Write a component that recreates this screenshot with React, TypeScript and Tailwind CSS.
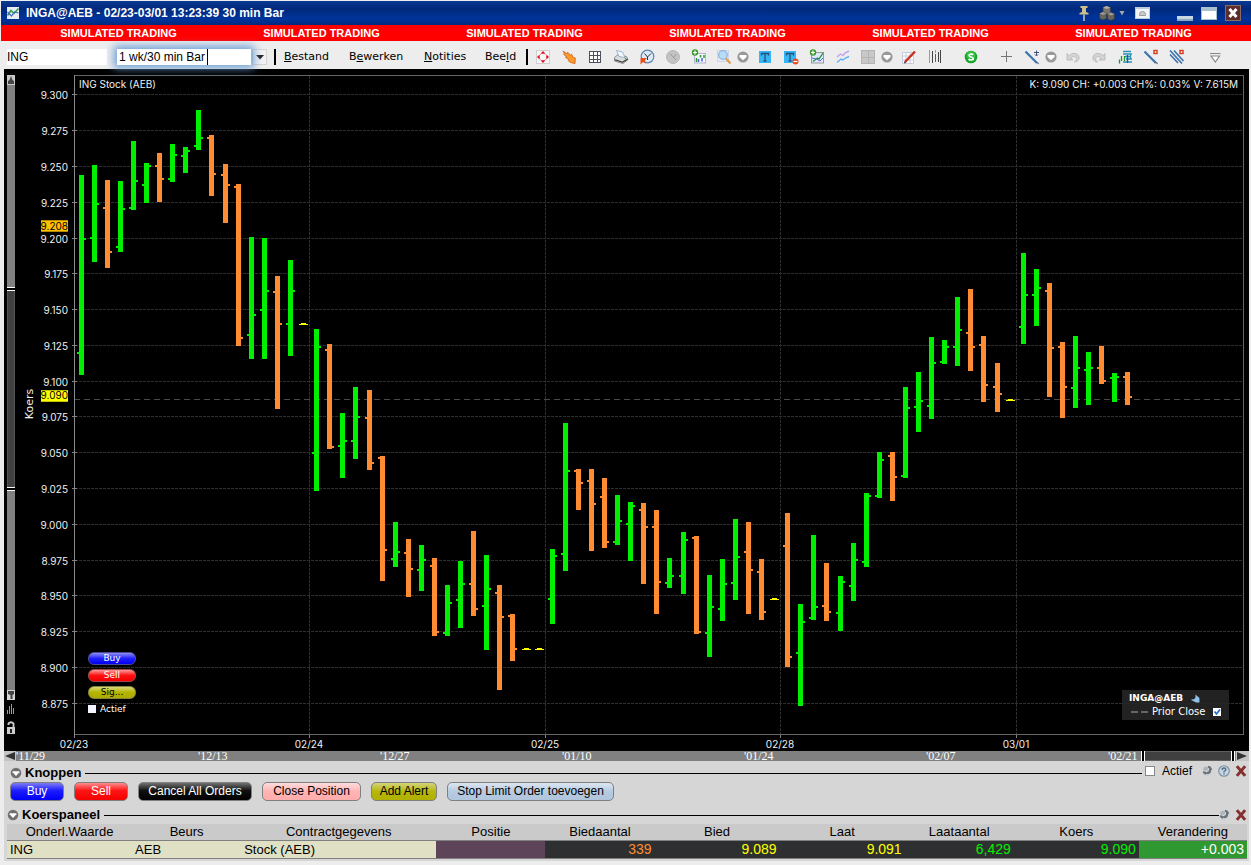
import React from 'react';

type Tone = 'up' | 'down';
type Bar = [x: number, high: number, low: number, open: number, close: number, tone: Tone];

const BARS: Bar[] = [
  [79, 175, 375, 353, 239, 'up'], [92, 165, 262, 238, 204, 'up'], [105, 180, 268, 208, 252, 'down'],
  [118, 181, 252, 247, 209, 'up'], [131, 141, 210, 208, 181, 'up'], [144, 163, 203, 185, 166, 'up'],
  [157, 153, 202, 166, 179, 'down'], [170, 144, 182, 179, 155, 'up'], [183, 147, 173, 156, 151, 'up'],
  [196, 110, 150, 146, 138, 'up'], [209, 135, 196, 138, 174, 'down'], [223, 164, 223, 175, 185, 'down'],
  [236, 184, 346, 187, 338, 'down'], [249, 237, 359, 335, 315, 'up'], [262, 238, 359, 310, 291, 'up'],
  [275, 276, 409, 292, 324, 'down'], [288, 260, 356, 324, 291, 'up'], [314, 329, 491, 453, 347, 'up'],
  [327, 344, 449, 350, 447, 'down'], [340, 413, 478, 446, 441, 'up'], [353, 387, 459, 441, 417, 'up'],
  [367, 390, 470, 418, 463, 'down'], [380, 456, 581, 458, 550, 'down'], [393, 522, 567, 559, 552, 'up'],
  [406, 539, 597, 553, 569, 'down'], [419, 545, 591, 570, 560, 'up'], [432, 558, 636, 566, 632, 'down'],
  [445, 585, 636, 633, 603, 'up'], [458, 561, 628, 600, 584, 'up'], [471, 531, 616, 584, 609, 'down'],
  [484, 555, 650, 606, 589, 'up'], [497, 585, 690, 593, 617, 'down'], [510, 614, 661, 616, 649, 'down'],
  [550, 549, 624, 599, 556, 'up'], [563, 423, 571, 554, 471, 'up'], [576, 469, 510, 471, 483, 'down'],
  [589, 469, 551, 481, 504, 'down'], [602, 478, 548, 497, 542, 'down'], [615, 495, 545, 542, 521, 'up'],
  [628, 502, 561, 524, 506, 'up'], [641, 503, 584, 510, 527, 'down'], [654, 510, 614, 527, 582, 'down'],
  [667, 558, 588, 583, 576, 'up'], [681, 532, 594, 576, 540, 'up'], [694, 536, 634, 538, 632, 'down'],
  [707, 575, 657, 633, 607, 'up'], [720, 559, 621, 609, 584, 'up'], [733, 519, 600, 583, 557, 'up'],
  [746, 522, 614, 552, 570, 'down'], [759, 559, 620, 572, 612, 'down'], [785, 513, 667, 546, 657, 'down'],
  [798, 604, 706, 653, 622, 'up'], [811, 535, 620, 618, 607, 'up'], [824, 563, 621, 606, 612, 'down'],
  [838, 576, 631, 613, 582, 'up'], [851, 543, 601, 586, 560, 'up'], [864, 493, 567, 562, 496, 'up'],
  [877, 452, 498, 496, 460, 'up'], [890, 452, 501, 456, 477, 'down'], [903, 387, 478, 476, 408, 'up'],
  [916, 372, 432, 407, 401, 'up'], [929, 337, 419, 406, 363, 'up'], [942, 340, 364, 362, 347, 'up'],
  [955, 297, 366, 347, 330, 'up'], [968, 289, 371, 333, 347, 'down'], [981, 336, 402, 345, 385, 'down'],
  [995, 363, 412, 387, 394, 'down'], [1021, 253, 344, 327, 295, 'up'], [1034, 269, 326, 295, 288, 'up'],
  [1047, 283, 397, 291, 348, 'down'], [1060, 342, 418, 347, 387, 'down'], [1073, 336, 408, 388, 368, 'up'],
  [1086, 352, 405, 370, 368, 'up'], [1099, 346, 384, 368, 381, 'down'], [1112, 373, 402, 378, 377, 'up'],
  [1125, 372, 405, 377, 397, 'down'],
];

const FLATS = [[299, 324], [522, 649], [535, 649], [770, 599], [1006, 400]];

const PRICES: [string, number][] = [
  ['9.300', 94], ['9.275', 130], ['9.250', 166], ['9.225', 202], ['9.200', 238], ['9.175', 273],
  ['9.150', 309], ['9.125', 345], ['9.100', 381], ['9.075', 416], ['9.050', 452], ['9.025', 488],
  ['9.000', 524], ['8.975', 560], ['8.950', 595], ['8.925', 631], ['8.900', 667], ['8.875', 703],
];

const DAYS: [string, number][] = [['02/23', 74], ['02/24', 309], ['02/25', 545], ['02/28', 780], ['03/01', 1016]];

function PriceChart() {
  return (
    <svg viewBox="19 69 1230 682" className="block h-auto w-full" shapeRendering="crispEdges" role="img" aria-label="ING Stock (AEB)">
      {PRICES.map(([p, y]) => (
        <g key={p}>
          <path d={`M75 ${y + 0.5}H1243`} stroke="#2e2e2e" strokeDasharray="3 1" />
          <path d={`M72 ${y + 0.5}h5`} stroke="#808080" />
        </g>
      ))}
      {DAYS.map(([d, x]) => (
        <g key={d}>
          {x > 74 && <path d={`M${x + 0.5} 76V734`} stroke="#2e2e2e" strokeDasharray="3 1" />}
          <path d={`M${x + 0.5} 734v4`} stroke="#808080" />
        </g>
      ))}
      <path d="M74 399.5H1243" stroke="#4a4a4a" strokeDasharray="6 4" />
      <rect x="74.5" y="75.5" width="1169" height="659" fill="none" stroke="#666" />
      <path d="M74.5 75V738" stroke="#8a8a8a" />
      {BARS.map(([x, high, low, open, close, tone]) => (
        <g key={x} fill={tone === 'up' ? '#00f000' : '#ff8c32'}>
          <rect x={x} y={high} width="5" height={low - high} />
          <rect x={x - 2} y={open - 1} width="2" height="2" />
          <rect x={x + 5} y={close - 1} width="2" height="2" />
        </g>
      ))}
      {FLATS.map(([x, y]) => (
        <path key={x} d={`M${x} ${y}h2v-1h5v1h2v1h-9z`} fill="#ffff00" />
      ))}
      <g className="font-[Inter,sans-serif] text-[10px]" fill="#f0f0f0">
        {PRICES.map(([p, y]) => (
          <text key={p} x="68" y={y + 5} textAnchor="end">{p}</text>
        ))}
        {DAYS.map(([d, x]) => (
          <text key={d} x={x} y="748" textAnchor="middle">{d}</text>
        ))}
        <text x="79" y="88">ING Stock (AEB)</text>
        <text x="1238" y="88" textAnchor="end">K: 9.090 CH: +0.003 CH%: 0.03% V: 7.615M</text>
        <rect x="41" y="220" width="27" height="12" fill="#ffc000" />
        <path d="M41 220.5h27M41 231.5h27" stroke="#b98a00" />
        <text x="68" y="230" textAnchor="end" fill="#000">9.208</text>
        <rect x="41" y="390" width="27" height="12" fill="#ffff00" />
        <path d="M41 390.5h27M41 401.5h27" stroke="#c0c000" />
        <text x="68" y="399" textAnchor="end" fill="#000">9.090</text>
      </g>
      <text transform="translate(33 404) rotate(-90)" textAnchor="middle" fill="#f0f0f0" className="font-['DejaVu_Sans',sans-serif] text-[11px]">Koers</text>
    </svg>
  );
}

function Glyph({ children, size = 16 }: { children: React.ReactNode; size?: number }) {
  return (
    <svg viewBox="0 0 16 16" width={size} height={size} aria-hidden="true" className="shrink-0">
      {children}
    </svg>
  );
}

const chevron = (
  <>
    <circle cx="8" cy="8" r="5.600" fill="#999" />
    <path d="M4.500 6h7v2L8 11.300 4.500 8z" fill="#fff" />
  </>
);

const plusBadge = (
  <>
    <circle cx="4" cy="3.500" r="3.200" fill="#3b9b2b" />
    <path d="M4 1.500v4M2 3.500h4" stroke="#fff" strokeWidth="1.200" />
  </>
);

const pen = (
  <>
    <path d="M1.500 2.500 13 14" stroke="#3c74ad" strokeWidth="2.200" />
    <path d="m13 14 2 1.500-1-2.500z" fill="#234" />
  </>
);

type Tool = { name: string; cell: string; art: React.ReactNode };

const TOOLS: Tool[] = [
  {
    name: 'Verplaatsen', cell: 'w-[26px]',
    art: (
      <>
        <rect x="1.500" y="1.500" width="13" height="13" fill="#f8f8f8" stroke="#d0d0d0" />
        <path d="M8 2l2.500 2.700h-5zM8 14l2.500-2.700h-5zM2 8l2.700-2.500v5zM14 8l-2.700-2.500v5z" fill="#e00e1e" />
        <path d="M5 5h1v1H5zM10 5h1v1h-1zM5 10h1v1H5zM10 10h1v1h-1z" fill="#f4a8a8" />
      </>
    ),
  },
  {
    name: 'Aanwijzer', cell: 'w-[26px]',
    art: (
      <path d="M2 2 6 4.800l.5-1.500L9.500 6l1.200-.8 1 2.800 2.600 1-.3 5.500-4.500-1L7 11.500l1-1L4.500 8.500l1-.5L2.500 5l1-.4z" fill="#f89a2c" stroke="#d8661c" strokeWidth=".9" />
    ),
  },
  {
    name: 'Raster', cell: 'w-[26px]',
    art: (
      <>
        <rect x="2.500" y="2.500" width="11" height="11" fill="#fff" />
        <path d="M2.500 2v12M6.500 2v12M10.500 2v12M13.500 2v12M2 2.500h12M2 6.500h12M2 10.500h12M2 13.500h12" stroke="#4d5060" shapeRendering="crispEdges" />
      </>
    ),
  },
  {
    name: 'Afdrukken', cell: 'w-[26px]',
    art: (
      <>
        <path d="M1.500 8.500 4.500 6l9 1.500 1.500 3-5 4-8.500-2.500z" fill="#dcdcdc" stroke="#777" strokeWidth=".8" />
        <path d="M3.500 1.500 9.500 3l2.500 5.500-6-1z" fill="#f2f8ff" stroke="#8aa4c0" strokeWidth=".8" />
        <path d="M2 10.800 9.500 13.200l5-3" stroke="#333" strokeWidth="1.200" fill="none" />
        <circle cx="12.500" cy="9.500" r=".8" fill="#3a3" />
      </>
    ),
  },
  {
    name: 'Tijd terug', cell: 'w-[26px]',
    art: (
      <>
        <circle cx="8.500" cy="7.500" r="6.300" fill="#d9eaf8" stroke="#6185ab" strokeWidth="1.200" />
        <path d="M5.500 4.500 8.500 8l3.500-3.500M8.500 8v3" stroke="#333" fill="none" />
        <path d="M1.500 9h6.500l-2 2 .5 3.500L4 13l-2.500 2.500z" fill="#e8501c" />
      </>
    ),
  },
  {
    name: 'Tijd', cell: 'w-[26px]',
    art: (
      <>
        <circle cx="8" cy="8" r="6.500" fill="#c3c3c3" stroke="#b8b8b8" />
        <path d="M5 4.500 8.500 8.500 11.500 5M8.500 8.500 11 11" stroke="#999" fill="none" />
      </>
    ),
  },
  {
    name: 'Indicator toevoegen', cell: 'w-[26px]',
    art: (
      <>
        <rect x="3.500" y="4.500" width="11" height="9.500" fill="#f4f6ff" stroke="#b0b4cc" />
        <path d="M5.500 9v4M9.500 6v2.500M13 6v3" stroke="#2b9b2b" strokeWidth="1.500" />
        <path d="M7.500 10v3M11 9v3.500" stroke="#4763d6" strokeWidth="1.500" />
        {plusBadge}
      </>
    ),
  },
  {
    name: 'Inzoomen', cell: 'w-[24px]',
    art: (
      <>
        <rect x="1.500" y="1.500" width="11" height="11" fill="#e4ecf8" stroke="#ccd6e8" />
        <circle cx="7" cy="6" r="4.300" fill="#b8dcf8" stroke="#8fb4d8" strokeWidth="1.200" />
        <path d="m10 9.500 4.500 5" stroke="#e09a4c" strokeWidth="2.200" />
      </>
    ),
  },
  { name: 'Zoomopties', cell: 'w-[14px]', art: chevron },
  {
    name: 'Tekst', cell: 'w-[26px] ml-0.5',
    art: (
      <>
        <rect x="2" y="2" width="12" height="12" fill="#36b5f4" />
        <path d="M4.500 6.500v-2h7v2M8 4.500V12M6.500 12h3" stroke="#24527c" strokeWidth="1.300" fill="none" />
      </>
    ),
  },
  {
    name: 'Tekst verwijderen', cell: 'w-[26px]',
    art: (
      <>
        <rect x="1" y="2" width="12" height="12" fill="#36b5f4" />
        <path d="M3.500 6.500v-2h7v2M7 4.500V12M5.500 12h3" stroke="#24527c" strokeWidth="1.300" fill="none" />
        <circle cx="12.500" cy="12.500" r="3" fill="#e64a1c" />
        <path d="M10.500 12.500h4" stroke="#fff" strokeWidth="1.200" />
      </>
    ),
  },
  {
    name: 'Studie toevoegen', cell: 'w-[26px]',
    art: (
      <>
        <rect x="2.500" y="3.500" width="12" height="10.500" fill="#e2e6ff" stroke="#999" />
        <path d="M4 12.500 8.500 9l1.500 1 4-6" stroke="#1f9a2e" strokeWidth="1.300" fill="none" />
        <path d="M3 9l4.500 1L11 12l3-3" stroke="#5b6fd8" fill="none" />
        {plusBadge}
      </>
    ),
  },
  {
    name: 'Vergelijken', cell: 'w-[26px]',
    art: (
      <>
        <path d="M2 8l3.500-3L8 6.500 10 4l4-2" stroke="#c4a0f0" strokeWidth="1.400" fill="none" />
        <path d="M2 13.500 6 10l2 1 2.500-2L14 7.500" stroke="#5fb0f4" strokeWidth="1.400" fill="none" />
      </>
    ),
  },
  {
    name: 'Indeling', cell: 'w-[24px]',
    art: (
      <g shapeRendering="crispEdges">
        <rect x="1" y="1" width="14" height="14" fill="#c8c8c8" />
        <path d="M1.500 1.500h13v13h-13zM8.500 1v14M1 8.500h14" stroke="#b4b4b4" fill="none" />
      </g>
    ),
  },
  { name: 'Indelingsopties', cell: 'w-[14px]', art: chevron },
  {
    name: 'Tekenen', cell: 'w-[26px] ml-0.5',
    art: (
      <>
        <path d="M1.500 3.500h11v11h-11zM5 3.500v11M9 3.500v11M1.500 7h11M1.500 11h11" fill="#fff" stroke="#c8cade" />
        <path d="M4 13 14 2.500" stroke="#c8301c" strokeWidth="2.400" />
        <path d="m3 14.500.5-2 1.500 1.200z" fill="#222" />
      </>
    ),
  },
  {
    name: 'Staven', cell: 'w-[26px]',
    art: (
      <g shapeRendering="crispEdges">
        <path d="M2.500 1v13M8.500 1v3" stroke="#6cbc6c" />
        <path d="M5.500 2v12M11.500 3v10M13.500 1v13" stroke="#444" />
        <path d="M8.500 5v8" stroke="#2465c8" />
      </g>
    ),
  },
  {
    name: 'Symbool', cell: 'ml-[10px] w-[26px]',
    art: (
      <>
        <circle cx="8" cy="8" r="6.300" fill="#18a42a" />
        <circle cx="8" cy="6.500" r="4.500" fill="#36c044" />
        <path d="M10.300 5.800C9.500 4.800 6 4.700 6 6.500s4.400 1 4.400 3-3.700 1.800-4.800.6" stroke="#fff" strokeWidth="1.600" fill="none" />
      </>
    ),
  },
  {
    name: 'Kruisdraad', cell: 'ml-[10px] w-[26px]',
    art: <path d="M7.500 2v11M2 7.500h11" stroke="#777" shapeRendering="crispEdges" />,
  },
  {
    name: 'Trendlijn', cell: 'w-[24px]',
    art: (
      <>
        {pen}
        <path d="M12.500 1.500v5M10 3.500h5M11 5.500l1.500 1.500L14 5.500" stroke="#347" fill="none" strokeWidth=".9" />
      </>
    ),
  },
  { name: 'Lijnopties', cell: 'w-[14px]', art: chevron },
  {
    name: 'Ongedaan maken', cell: 'ml-0.5 w-[26px]',
    art: (
      <path d="M2 4.500v6.500h6L6 9.200C7.500 7 11 7 11.300 9.500c.2 1.500-.8 2.700-2 3.500C13 12.800 14.500 10.500 14 8c-.8-4-6.500-5-9.800-1.300z" fill="#d4d4d4" stroke="#b4b4b4" strokeWidth=".8" />
    ),
  },
  {
    name: 'Opnieuw', cell: 'w-[26px]',
    art: (
      <path d="M14 4.500v6.500H8l2-1.800C8.500 7 5 7 4.700 9.500c-.2 1.500.8 2.700 2 3.500C3 12.800 1.500 10.500 2 8c.8-4 6.500-5 9.800-1.300z" fill="#d4d4d4" stroke="#b4b4b4" strokeWidth=".8" />
    ),
  },
  {
    name: 'Volumeprofiel', cell: 'w-[26px]',
    art: (
      <>
        <path d="M6 2.500h8M6 5h9M8 7.500h5M6 13h9" stroke="#2c93b8" strokeWidth="1.700" />
        <path d="M13.500 5v5M9 10h6" stroke="#2c93b8" strokeWidth="1.300" />
        <path d="M2.500 10.500v4M4.500 7v5M7.500 7v5" stroke="#18982a" strokeWidth="1.300" />
        <path d="M10.500 6v8" stroke="#2450b0" strokeWidth="1.400" />
      </>
    ),
  },
  {
    name: 'Lijn wissen', cell: 'w-[26px]',
    art: (
      <>
        {pen}
        <rect x="11" y="1.500" width="3" height="3" fill="#fff" stroke="#d8371c" strokeWidth="1.400" />
      </>
    ),
  },
  {
    name: 'Alle lijnen wissen', cell: 'w-[26px]',
    art: (
      <>
        <path d="M1 5.500 9 14M1 1.500 13 14.500M5 1.500l9.500 10.500" stroke="#3c74ad" strokeWidth="1.700" />
        <rect x="11" y="1.500" width="3" height="3" fill="#fff" stroke="#d8371c" strokeWidth="1.400" />
      </>
    ),
  },
  {
    name: 'Meer', cell: 'ml-[12px] w-[26px]',
    art: <path d="M3 4.500h10.500M4 7h8.500L8.300 13z" fill="#fff" stroke="#888" strokeWidth="1.200" />,
  },
];

function TitleBar() {
  return (
    <header className="flex h-6 items-center bg-[linear-gradient(#0a3a94,#00297a_30%,#00349c_75%,#00297c)] pr-[10px] pl-1 text-white">
      <Glyph>
        <rect x="2" y="2" width="12" height="12" fill="#e8ecf4" />
        <path d="M2.500 10.500 6 5.500l3 3 4.500-5" stroke="#32a040" strokeWidth="1.500" fill="none" />
        <path d="M2.500 7l4 4 3-4 4 1" stroke="#4668d0" strokeWidth="1.200" fill="none" />
      </Glyph>
      <h1 className="ml-[5px] flex-1 text-[12px] leading-4 font-bold">INGA@AEB - 02/23-03/01 13:23:39 30 min Bar</h1>
      <button type="button" aria-label="Vastzetten" className="mr-[7px]">
        <Glyph>
          <path d="M4.500 1h7v2H10v4l2.500 1v1.500h-9V8L6 7V3H4.500z" fill="#cdbf8a" />
          <path d="M8 9.500V16" stroke="#e8e2c4" strokeWidth="1.300" />
        </Glyph>
      </button>
      <button type="button" aria-label="Groep" className="flex items-center">
        <Glyph>
          <path d="M4 2.500 7.500 1l4 1.500v6l-4 1.500L4 8.500z" fill="#77756f" stroke="#3a3a3a" strokeWidth=".6" />
          <path d="m4 2.500 3.500-1.500 4 1.500L7.500 4z" fill="#b0aea6" />
          <path d="M.5 8.500 4 7l3.500 1.500v5L4 15 .5 13.500zM8.500 9 12 7.500 15.500 9v5L12 15.500 8.500 14z" fill="#66645f" stroke="#333" strokeWidth=".6" />
          <path d="M.5 8.500 4 7l3.500 1.500L4 10zM8.500 9 12 7.500 15.500 9 12 10.500z" fill="#9c9a92" />
        </Glyph>
        <svg viewBox="0 0 8 8" width="8" height="8" className="ml-[3px]" aria-hidden="true"><path d="M1.500 2h5L4 6.500z" fill="#aaa" /></svg>
      </button>
      <button type="button" aria-label="Venster" className="mr-[27px] ml-[9px] flex h-3 w-[15px] items-end justify-center border border-t-2 border-[#bcd] bg-[#f2f5f8] pb-0.5">
        <span className="h-[5px] w-[7px] rounded-t-sm border border-[#999] bg-[#ccc]" />
      </button>
      <button type="button" aria-label="Minimaliseren" className="mt-[10px] mr-2 h-[5px] w-4 border-b-2 border-[#8fa9c0] bg-[#c6d8e4]" />
      <button type="button" aria-label="Maximaliseren" className="mr-2 h-[13px] w-4 border border-t-4 border-[#a9bfd2] bg-white" />
      <button type="button" aria-label="Sluiten" className="border border-[#8b6a66] bg-[#5a2d2a]">
        <Glyph size={14}>
          <path d="M4 3.500l8 9M12 3.500l-8 9" stroke="#fff" strokeWidth="3.400" />
        </Glyph>
      </button>
    </header>
  );
}

function Toolbar() {
  return (
    <div className="flex h-7 items-center pt-1 pb-0 pl-1.5">
      <input aria-label="Symbool" defaultValue="ING" className="h-4 w-[100px] bg-white text-[12px] leading-4 text-black outline-none" />
      <div className="relative z-10 ml-[10px] h-4 w-[134px] bg-white shadow-[0_0_8px_3px_#6b9fd6]">
        <input aria-label="Periode" defaultValue="1 wk/30 min Bar" className="block h-4 w-full bg-white pl-0.5 text-[12px] leading-4 text-black outline-none" />
        <span className="absolute top-0 left-[90px] h-4 w-px bg-black" />
      </div>
      <button type="button" aria-label="Kies periode" className="ml-px flex h-4 w-[15px] items-center justify-center border border-[#d4d4d4] bg-[#f2f2f2]">
        <svg viewBox="0 0 8 5" width="8" height="5" aria-hidden="true"><path d="M0 0h8L4 4.500z" fill="#222" /></svg>
      </button>
      <span className="ml-[7px] h-4 w-0.5 bg-black" />
      <nav className="flex gap-[19px] pr-[9px] pl-2 font-['DejaVu_Sans',sans-serif] text-[11px] leading-4 text-black">
        <button type="button" className="w-[46px] text-left"><u>B</u>estand</button>
        <button type="button" className="w-[56px] text-left">B<u>e</u>werken</button>
        <button type="button" className="w-[42px] text-left"><u>N</u>otities</button>
        <button type="button" className="w-[32px] text-left">Bee<u>l</u>d</button>
      </nav>
      <span className="h-4 w-0.5 bg-black" />
      <div className="flex items-center pl-0.5">
        {TOOLS.map((t) => (
          <button key={t.name} type="button" aria-label={t.name} className={`flex h-5 shrink-0 items-center justify-center ${t.cell}`}>
            <Glyph>{t.art}</Glyph>
          </button>
        ))}
      </div>
    </div>
  );
}

function RangeHandle() {
  return <span className="h-1 w-full border-t border-b border-white bg-black" />;
}

function PriceScroller() {
  return (
    <div className="flex w-[15px] shrink-0 flex-col items-center pt-1.5 pr-1 pl-[3px]">
      <button type="button" aria-label="Omhoog" className="h-[10px] w-2 bg-[#c8c8c8]">
        <svg viewBox="0 0 8 10" width="8" height="10" aria-hidden="true"><path d="M4 1l1.500 4L7 6v3H1V6l1.500-1z" fill="#444" /></svg>
      </button>
      <span className="w-2 grow-[203] bg-[#808080]" />
      <span className="flex w-2"><RangeHandle /></span>
      <span className="w-2 grow-[196] border-x border-[#555] bg-[#404040]" />
      <span className="flex w-2"><RangeHandle /></span>
      <span className="w-2 grow-[200] bg-[#808080]" />
      <button type="button" aria-label="Omlaag" className="h-[10px] w-2 bg-[#d4d4d4]">
        <svg viewBox="0 0 8 10" width="8" height="10" aria-hidden="true"><path d="M1 1h6v3L5.500 5v4h-2V5L1 4z" fill="#444" /></svg>
      </button>
      <svg viewBox="0 0 8 12" width="8" height="12" className="mt-[3px]" aria-hidden="true" shapeRendering="crispEdges">
        <path d="M.5 7v4M2.500 3v8M4.500 1v10M6.500 5v6" stroke="#999" />
      </svg>
      <svg viewBox="0 0 8 14" width="8" height="14" className="mt-1.5 mb-4" aria-hidden="true">
        <path d="M1.500 4V2.500Q4 0 6.500 2.500V7" stroke="#ccc" strokeWidth="1.800" fill="none" />
        <rect y="6" width="8" height="7" fill="#ccc" />
        <rect x="3" y="8" width="2" height="4" fill="#222" />
      </svg>
    </div>
  );
}

const PILL = "h-[13px] w-12 rounded-[6px] border text-[9px] leading-[11px] font-['DejaVu_Sans',sans-serif]";

function ChartOverlay() {
  return (
    <>
      <div className="absolute bottom-9 left-[84px] flex flex-col gap-1">
        <button type="button" className={`${PILL} border-[#4a4a9c] bg-[linear-gradient(#8e8ef0,#2020ff_50%,#0000f0)] text-white`}>Buy</button>
        <button type="button" className={`${PILL} border-[#9c4a4a] bg-[linear-gradient(#ff9a9a,#ff1010_50%,#f00000)] text-white`}>Sell</button>
        <button type="button" className={`${PILL} border-[#84843a] bg-[linear-gradient(#d8d878,#b4b400_50%,#acac00)] text-black`}>Sig...</button>
        <label className="flex items-center gap-1 font-['DejaVu_Sans',sans-serif] text-[9px] leading-3 text-white">
          <input type="checkbox" className="size-2 appearance-none bg-[#f4f4ff]" />
          Actief
        </label>
      </div>
      <div className="absolute right-5 bottom-[31px] flex h-[30px] w-[107px] flex-col justify-center bg-[#262626]/90 pl-[7px] font-['DejaVu_Sans',sans-serif] text-[9px] leading-[13px] text-white">
        <div className="flex items-center gap-2 font-bold">
          INGA@AEB
          <Glyph size={9}>
            <path d="M1 9c4 2 8 0 7-8l7 6v8H9L1 11z" fill="#8fc0ea" />
          </Glyph>
        </div>
        <label className="flex items-center whitespace-nowrap">
          <span className="mr-1 ml-0.5 flex gap-[3px]">
            <span className="h-0.5 w-[7px] bg-[#666]" />
            <span className="h-0.5 w-[7px] bg-[#666]" />
          </span>
          <span className="text-[10px]">Prior Close</span>
          <span className="relative ml-2 flex size-2">
            <input type="checkbox" defaultChecked className="size-2 appearance-none bg-white" />
            <svg viewBox="0 0 8 8" className="pointer-events-none absolute size-2" aria-hidden="true"><path d="M1.500 3.500 3.500 6 7 1.500" stroke="#1c6fd0" strokeWidth="1.700" fill="none" /></svg>
          </span>
        </label>
      </div>
    </>
  );
}

const WEEKS = ["'11/29", "'12/13", "'12/27", "'01/10", "'01/24", "'02/07"];

function TimeScroller() {
  return (
    <div className="flex h-[10px] bg-[#808080] font-['Liberation_Serif',serif] text-[12px] leading-[10px] text-white">
      <button type="button" aria-label="Eerder" className="w-3 bg-[#c4c4c4]">
        <svg viewBox="0 0 12 10" width="12" height="10" aria-hidden="true"><path d="M1 5l10-4v8z" fill="#333" /></svg>
      </button>
      {WEEKS.map((w) => <span key={w} className="w-0 grow-[182]">{w}</span>)}
      <span className="w-0 grow-[33] whitespace-nowrap">'02/21</span>
      <span className="w-1 border-x border-white bg-black" />
      <span className="w-[86px] border-y border-[#606060] bg-[#404040]" />
      <span className="w-1 border-x border-white bg-black" />
      <button type="button" aria-label="Later" className="ml-px w-[13px] bg-[#c4c4c4]">
        <svg viewBox="0 0 12 10" width="12" height="10" aria-hidden="true"><path d="M1 1l10 4-10 4z" fill="#333" /></svg>
      </button>
    </div>
  );
}

function WrenchButton() {
  return (
    <button type="button" aria-label="Instellingen">
      <Glyph size={12}>
        <path d="M9 1a6.500 6.500 0 1 1-8 8.500l1-1.500 4 1.500 3-1.500.5-3.500L7 3z" fill="#6c747a" />
        <path d="M2 3.500 5 2l3 2-.5 3-3 1-3-1.500z" fill="#aab4bb" />
        <path d="M5 12.500a5.500 5.500 0 0 0 8-6" stroke="#d0d8dd" strokeWidth="1.800" fill="none" />
      </Glyph>
    </button>
  );
}

function CloseButton() {
  return (
    <button type="button" aria-label="Sluiten">
      <Glyph size={12}>
        <path d="M2.500 1.500 13.500 14.500M13.500 1.500 2.500 14.500" stroke="#84302c" strokeWidth="4" />
      </Glyph>
    </button>
  );
}

function SectionToggle({ title }: { title: string }) {
  return (
    <button type="button" className="flex items-center gap-[3px] text-[13px] leading-4 font-bold text-black">
      <Glyph size={12}>
        <circle cx="8" cy="8" r="7" fill="#707070" />
        <path d="M3.500 5.500h9v1.500L8 12 3.500 7z" fill="#fff" />
      </Glyph>
      {title}
    </button>
  );
}

const ORDER_BUTTONS = [
  { label: 'Buy', cls: 'w-[54px] bg-[linear-gradient(#7c7cf4,#1c1cff_45%,#0000f4)] text-white' },
  { label: 'Sell', cls: 'w-[54px] bg-[linear-gradient(#ff8c8c,#ff1414_45%,#f60000)] text-white' },
  { label: 'Cancel All Orders', cls: 'w-[114px] bg-[linear-gradient(#707070,#101010_45%,#000000)] text-white' },
  { label: 'Close Position', cls: 'w-[99px] bg-[linear-gradient(#ffdcdc,#ffb4b4_50%,#ffacac)] text-black' },
  { label: 'Add Alert', cls: 'w-[66px] bg-[linear-gradient(#d4d47c,#b6b60c_50%,#b0b000)] text-black' },
  { label: 'Stop Limit Order toevoegen', cls: 'w-[167px] bg-[linear-gradient(#dce6f2,#b6cae0_50%,#b0c6dc)] text-black' },
];

const COLUMNS = [
  { head: 'Onderl.Waarde', col: 'w-[125px]', value: 'ING', cell: 'bg-[#e0e0c4] text-left text-[13px] text-black' },
  { head: 'Beurs', col: 'w-[109px]', value: 'AEB', cell: 'bg-[#e0e0c4] text-left text-[13px] text-black' },
  { head: 'Contractgegevens', col: 'w-[195px]', value: 'Stock (AEB)', cell: 'bg-[#e0e0c4] text-left text-[13px] text-black' },
  { head: 'Positie', col: 'w-[109px]', value: '', cell: 'bg-[#5e4458]' },
  { head: 'Biedaantal', col: 'w-[109px]', value: '339', cell: 'bg-[#2e2f30] text-right text-[14px] text-[#ff8c32]' },
  { head: 'Bied', col: 'w-[125px]', value: '9.089', cell: 'bg-[#2e2f30] text-right text-[14px] text-[#ffff00]' },
  { head: 'Laat', col: 'w-[125px]', value: '9.091', cell: 'bg-[#2e2f30] text-right text-[14px] text-[#ffff00]' },
  { head: 'Laataantal', col: 'w-[109px]', value: '6,429', cell: 'bg-[#2e2f30] text-right text-[14px] text-[#00f000]' },
  { head: 'Koers', col: 'w-[125px]', value: '9.090', cell: 'bg-[#2e2f30] text-right text-[14px] text-[#00f000]' },
  { head: 'Verandering', col: 'w-[108px]', value: '+0.003', cell: 'bg-[#309830] text-right text-[14px] text-white' },
];

export default function App() {
  return (
    <div className="min-h-screen bg-[#ededed] pt-px pl-px font-['Liberation_Sans',Arial,sans-serif]">
      <TitleBar />
      <div className="grid h-4 grid-cols-6 bg-[#ff0000] px-4 text-center text-[11px] leading-4 font-bold text-white">
        {[0, 1, 2, 3, 4, 5].map((i) => <span key={i}>SIMULATED TRADING</span>)}
      </div>
      <Toolbar />
      <main className="mr-0.5 ml-[3px] bg-[#d6d6d6]">
        <section className="relative flex bg-black">
          <PriceScroller />
          <div className="min-w-0 flex-1"><PriceChart /></div>
          <ChartOverlay />
        </section>
        <TimeScroller />
        <section className="pt-1">
          <div className="flex h-4 items-center pr-0.5 pl-1.5">
            <SectionToggle title="Knoppen" />
            <span className="ml-1 h-px flex-1 bg-black" />
            <div className="ml-[3px] flex items-center pb-1">
              <label className="flex items-center gap-[7px] text-[12px] leading-4 text-black">
                <input type="checkbox" className="size-[10px] appearance-none border border-[#888] bg-white" />
                Actief
              </label>
              <span className="ml-[10px] flex gap-1">
                <WrenchButton />
                <button type="button" aria-label="Help">
                  <Glyph size={12}>
                    <circle cx="8" cy="8" r="7" fill="#c8d6e2" stroke="#7890a6" strokeWidth="1.600" />
                    <path d="M5.500 6.500Q5.500 4 8 4t2.500 2.200Q10.500 7.500 8 8.500v1.500M8 11v1.700" stroke="#4f6880" strokeWidth="1.700" fill="none" />
                  </Glyph>
                </button>
                <span className="ml-px flex"><CloseButton /></span>
              </span>
            </div>
          </div>
          <div className="flex gap-[10px] pt-px pl-1.5">
            {ORDER_BUTTONS.map((b) => (
              <button key={b.label} type="button" className={`h-[19px] rounded-[5px] border border-[#808080] text-[12px] leading-[17px] whitespace-nowrap ${b.cls}`}>{b.label}</button>
            ))}
          </div>
        </section>
        <section className="pt-1.5 pr-0.5 pb-0.5 pl-[3px]">
          <div className="flex h-4 items-center">
            <SectionToggle title="Koerspaneel" />
            <span className="ml-1 h-px flex-1 bg-black" />
            <span className="flex gap-1">
              <WrenchButton />
              <CloseButton />
            </span>
          </div>
          <table className="mt-px w-full table-fixed border-separate border-spacing-0 text-black">
            <thead>
              <tr>
                {COLUMNS.map((c) => (
                  <th key={c.head} scope="col" className={`h-4 border-b border-[#808080] bg-[#cacaca] p-0 text-[13px] leading-4 font-normal ${c.col}`}>{c.head}</th>
                ))}
              </tr>
            </thead>
            <tbody>
              <tr>
                {COLUMNS.map((c) => (
                  <td key={c.head} className={`h-[18px] border-b border-[#808080] px-[3px] py-0 leading-[17px] ${c.cell}`}>{c.value}</td>
                ))}
              </tr>
            </tbody>
          </table>
        </section>
      </main>
    </div>
  );
}
